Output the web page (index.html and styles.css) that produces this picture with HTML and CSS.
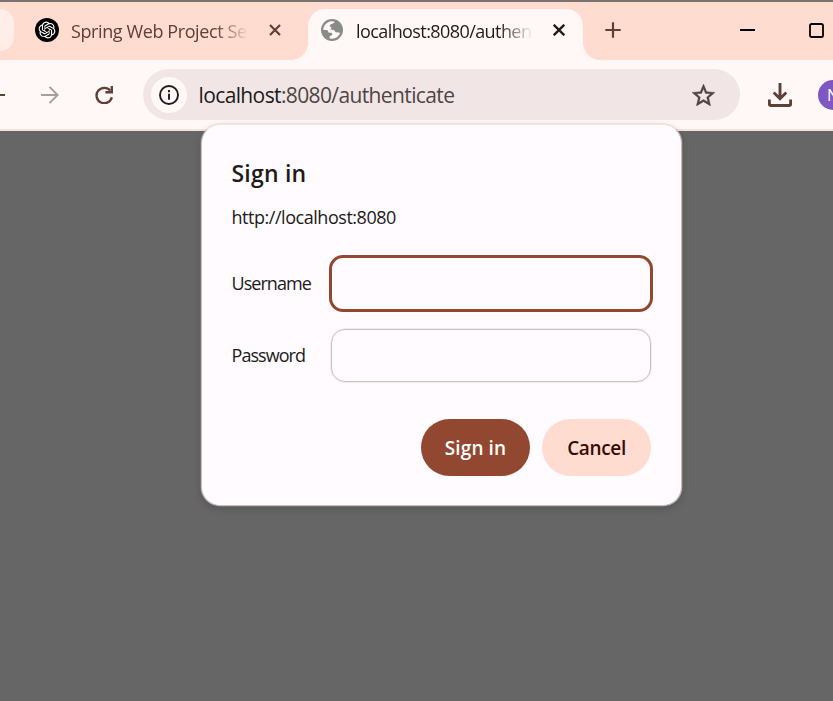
FILE: index.html
```html
<!DOCTYPE html>
<html lang="en">
<head>
<meta charset="utf-8">
<title>localhost:8080/authenticate</title>
<link rel="stylesheet" href="styles.css">
</head>
<body>
<div class="browser">
  <header class="tabstrip">
    <div class="tab-hover"></div>
    <div class="tab">
      <svg class="favicon" viewBox="0 0 24 24" width="24" height="24"><circle cx="12" cy="12" r="12" fill="#000"/><path transform="translate(3.6 3.6) scale(.7)" fill="#fff" d="M22.2819 9.8211a5.9847 5.9847 0 0 0-.5157-4.9108 6.0462 6.0462 0 0 0-6.5098-2.9A6.0651 6.0651 0 0 0 4.9807 4.1818a5.9847 5.9847 0 0 0-3.9977 2.9 6.0462 6.0462 0 0 0 .7427 7.0966 5.98 5.98 0 0 0 .511 4.9107 6.051 6.051 0 0 0 6.5146 2.9001A5.9847 5.9847 0 0 0 13.2599 24a6.0557 6.0557 0 0 0 5.7718-4.2058 5.9894 5.9894 0 0 0 3.9977-2.9001 6.0557 6.0557 0 0 0-.7475-7.0729zm-9.022 12.6081a4.4755 4.4755 0 0 1-2.8764-1.0408l.1419-.0804 4.7783-2.7582a.7948.7948 0 0 0 .3927-.6813v-6.7369l2.02 1.1686a.071.071 0 0 1 .038.052v5.5826a4.504 4.504 0 0 1-4.4945 4.4944zm-9.6607-4.1254a4.4708 4.4708 0 0 1-.5346-3.0137l.142.0852 4.783 2.7582a.7712.7712 0 0 0 .7806 0l5.8428-3.3685v2.3324a.0804.0804 0 0 1-.0332.0615L9.74 19.9502a4.4992 4.4992 0 0 1-6.1408-1.6464zM2.3408 7.8956a4.485 4.485 0 0 1 2.3655-1.9728V11.6a.7664.7664 0 0 0 .3879.6765l5.8144 3.3543-2.0201 1.1685a.0757.0757 0 0 1-.071 0l-4.8303-2.7865A4.504 4.504 0 0 1 2.3408 7.872zm16.5963 3.8558L13.1038 8.364 15.1192 7.2a.0757.0757 0 0 1 .071 0l4.8303 2.7913a4.4944 4.4944 0 0 1-.6765 8.1042v-5.6772a.79.79 0 0 0-.407-.667zm2.0107-3.0231l-.142-.0852-4.7735-2.7818a.7759.7759 0 0 0-.7854 0L9.409 9.2297V6.8974a.0662.0662 0 0 1 .0284-.0615l4.8303-2.7866a4.4992 4.4992 0 0 1 6.6802 4.66zM8.3065 12.863l-2.02-1.1638a.0804.0804 0 0 1-.038-.0567V6.0742a4.4992 4.4992 0 0 1 7.3757-3.4537l-.142.0805L8.704 5.459a.7948.7948 0 0 0-.3927.6813zm1.0976-2.3654l2.602-1.4998 2.6069 1.4998v2.9994l-2.5974 1.4997-2.6067-1.4997Z"/></svg>
      <span class="tab-title">Spring Web Project Setup</span>
      <svg class="close" viewBox="0 0 12 12" width="12" height="12"><path d="M1 1l10 10M11 1L1 11" stroke="currentColor" stroke-width="2.2"/></svg>
    </div>
    <div class="tab active">
      <svg class="favicon" viewBox="0 0 22 22" width="22" height="22"><circle cx="11" cy="11" r="11" fill="#898b8a"/><path fill="#fff8f6" d="M2.200 10.800C2.500 6.200 6 2.700 10.400 2.200L13.400 2.400Q13.600 4 12 4.600L9.600 5.300 8.700 7.600 10.700 8.800 9.300 10.400 13 11 14.600 13.300 18.300 13.600 19 14.600C17.500 17.700 14.700 19.600 11.300 19.700L8.400 19.200 8.800 17.300 11.300 15.800 11 14 7.500 13.600 6.600 11.300Z"/></svg>
      <span class="tab-title">localhost:8080/authenticate</span>
      <svg class="close" viewBox="0 0 12 12" width="12" height="12"><path d="M.7.7l10.6 10.6M11.3.7L.7 11.3" stroke="currentColor" stroke-width="2.3"/></svg>
    </div>
    <svg class="new-tab" viewBox="0 0 16 16" width="16" height="16"><path d="M8 .3v15.4M.3 8h15.4" stroke="#5d4037" stroke-width="2.2"/></svg>
    <svg class="minimize" viewBox="0 0 15 15" width="15" height="15"><path d="M0 7h15" stroke="#000" stroke-width="2"/></svg>
    <svg class="maximize" viewBox="0 0 15 15" width="15" height="15"><rect x="1" y="1" width="13" height="13" rx="1.6" fill="none" stroke="#000" stroke-width="1.8"/></svg>
  </header>
  <nav class="toolbar">
    <svg class="back" viewBox="0 0 5 20" width="5" height="20"><path d="M0 10h5" stroke="#5d4037" stroke-width="2"/></svg>
    <svg class="forward" viewBox="0 0 18 18" width="18" height="18"><path d="M0 9h16.500M8.500.9L16.600 9l-8.100 8.100" fill="none" stroke="#aa9e9a" stroke-width="2"/></svg>
    <svg class="reload" viewBox="0 0 18 18" width="18" height="18"><path d="M15.200 4.600A7.700 7.700 0 1 0 16.800 11.200" fill="none" stroke="#5d4037" stroke-width="2.400"/><path d="M18 0v7.500h-7.600V5.100h5.200V0z" fill="#5d4037"/></svg>
    <div class="omnibox">
      <span class="site-info"><svg viewBox="0 0 20 20" width="20" height="20"><circle cx="10" cy="10" r="9" fill="none" stroke="#1f1a1b" stroke-width="1.9"/><path d="M10 8.800v5.900M10 5.100v2.100" stroke="#1f1a1b" stroke-width="1.900"/></svg></span>
      <span class="url"><b>localhost</b>:8080/authenticate</span>
      <svg class="star" viewBox="2 2 20 19" width="23" height="22"><path fill="#4d4446" stroke="#4d4446" stroke-width=".35" d="M22 9.240l-7.190-.620L12 2 9.190 8.630 2 9.240l5.460 4.730L5.820 21 12 17.270 18.180 21l-1.630-7.030L22 9.240zM12 15.400l-3.760 2.270 1-4.280-3.320-2.880 4.380-.380L12 6.100l1.710 4.040 4.380.380-3.320 2.880 1 4.280L12 15.400z"/></svg>
    </div>
    <svg class="download" viewBox="0 0 24 24" width="24" height="24"><path d="M12 0v16M5.700 9.500L12 15.800 18.300 9.500M1.350 16.500v4.500q0 1.500 1.500 1.500h18.300q1.500 0 1.500-1.500V16.500" fill="none" stroke="#5d4037" stroke-width="2.900"/></svg>
    <span class="avatar">N</span>
  </nav>
  <main class="page">
    <form class="dialog">
      <h1>Sign in</h1>
      <p>http://localhost:8080</p>
      <div class="row"><label for="u">Username</label><input id="u" class="focused" type="text"></div>
      <div class="row"><label for="p">Password</label><input id="p" type="password"></div>
      <div class="actions"><button class="primary" type="button">Sign in</button><button class="secondary" type="button">Cancel</button></div>
    </form>
  </main>
</div>
</body>
</html>
```
FILE: styles.css
```css
* { box-sizing: border-box; }
body { margin: 0; font-family: "Open Sans", "Noto Sans", sans-serif; color: #201a19; overflow: hidden; }
svg { display: block; flex: none; }
.browser { width: 833px; height: 701px; display: flex; flex-direction: column; background: #666; }

.tabstrip { height: 60px; flex: none; display: flex; align-items: flex-start; border-top: 2px solid #787270; background: #ffdbd0; overflow: hidden; }
.tab-hover { width: 14px; height: 42px; margin-top: 7px; background: #ffede7; border-radius: 0 14px 14px 0; flex: none; }
.tab { width: 294px; height: 51px; margin-top: 7px; padding-left: 21px; display: flex; align-items: flex-start; flex: none; color: #5d4037; }
.favicon { margin-top: 9px; }
.tab-title { width: 178px; margin: 9px 0 0 12px; font-size: 18px; line-height: 26px; letter-spacing: -.4px; white-space: nowrap; overflow: hidden; -webkit-mask-image: linear-gradient(90deg, #000 calc(100% - 34px), transparent); mask-image: linear-gradient(90deg, #000 calc(100% - 34px), transparent); }
.close { margin: 15px 0 0 20px; }
.tab.active { position: relative; width: 275px; padding-left: 13px; background: #fff8f6; border-radius: 17px 17px 0 0; color: #201a19; }
.tab.active::before, .tab.active::after { content: ""; position: absolute; bottom: 0; width: 17px; height: 17px; }
.tab.active::before { right: 100%; background: radial-gradient(circle at 0 0, transparent 16.5px, #fff8f6 17.2px); }
.tab.active::after { left: 100%; background: radial-gradient(circle at 100% 0, transparent 16.5px, #fff8f6 17.2px); }
.active .favicon { margin-top: 10px; }
.active .tab-title { margin-left: 13px; width: 177px; letter-spacing: -.58px; }
.active .close { margin-left: 19.5px; }
.new-tab { margin: 20px 0 0 22px; }
.minimize { margin: 21px 0 0 119px; }
.maximize { margin: 21px 0 0 54px; }

.toolbar { height: 71px; flex: none; display: flex; align-items: center; background: #fff8f6; border-bottom: 2px solid #f3e2de; overflow: hidden; }
.forward { margin-left: 36px; }
.reload { margin-left: 36px; }
.omnibox { width: 597px; height: 51px; margin-left: 30px; padding: 0 25px 0 8px; display: flex; align-items: center; border-radius: 26px; background: #f1e6e5; flex: none; }
.site-info { width: 36px; height: 36px; display: grid; place-items: center; background: #fff8f6; border-radius: 50%; }
.url { flex: 1; margin-left: 11.5px; font-size: 21px; line-height: 30px; letter-spacing: -.62px; color: #4e4546; white-space: nowrap; }
.url b { font-weight: 400; color: #201a1b; }
.download { margin-left: 28px; }
.avatar { width: 30px; height: 30px; margin-left: 26px; border-radius: 50%; background: #7e57c2; color: #fff; font-size: 16px; line-height: 30px; text-align: center; flex: none; }

.page { flex: 1; background: #666; }
.dialog { position: relative; width: 481px; height: 382px; margin: -7px 0 0 201px; padding: 32px 28px 28px 29.5px; border: 1px solid #c8bab6; border-top-color: #f5e4df; border-radius: 19px; background: #fffbff; box-shadow: 0 0 0 .5px rgba(200, 186, 182, .5), 0 3px 8px rgba(0, 0, 0, .16); }
h1 { margin: 0; font-size: 23px; line-height: 32px; font-weight: 600; letter-spacing: .2px; }
p { margin: 15px 0 25px; font-size: 18px; line-height: 26px; letter-spacing: -.46px; }
.row { display: flex; align-items: center; justify-content: space-between; height: 57px; margin-bottom: 15px; }
label { margin-top: -1px; font-size: 18px; line-height: 26px; letter-spacing: -.95px; }
input { width: 320px; height: 53px; margin-right: 2px; padding: 0 14px; border: 1px solid #cfbfbb; border-radius: 14px; background: transparent; box-shadow: 0 0 0 .5px rgba(207, 191, 187, .5); outline: none; font: 18px "Open Sans", sans-serif; }
input.focused { width: 324px; height: 57px; margin-right: 0; border: 3px solid #924830; box-shadow: none; }
.actions { display: flex; justify-content: flex-end; gap: 12px; margin: 35px 2px 0 0; }
button { width: 109px; height: 57px; padding: 1px 0 0; border: 0; border-radius: 29px; font: 600 19px/26px "Open Sans", sans-serif; letter-spacing: -.35px; }
.primary { background: #924830; color: #fff; letter-spacing: .1px; }
.secondary { background: #ffdbd0; color: #3a0b00; }
```
